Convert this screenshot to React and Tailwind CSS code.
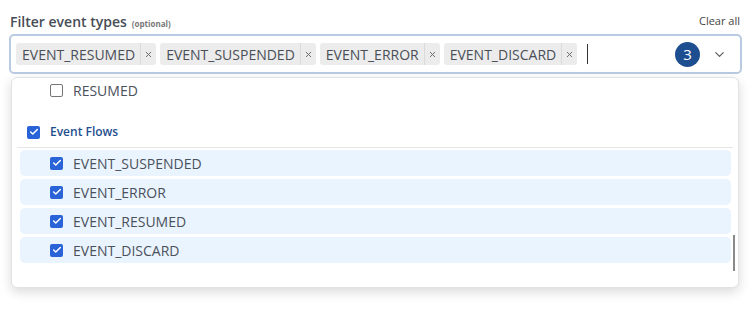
import { X, ChevronDown, Check } from 'lucide-react';

const SELECTED = ['EVENT_RESUMED', 'EVENT_SUSPENDED', 'EVENT_ERROR', 'EVENT_DISCARD'];
const FLOWS = ['EVENT_SUSPENDED', 'EVENT_ERROR', 'EVENT_RESUMED', 'EVENT_DISCARD'];

function Box({ checked }) {
  if (!checked) {
    return <span className="w-[13px] h-[13px] rounded-[2px] border border-[#767676] bg-white shrink-0" />;
  }
  return (
    <span className="w-[13px] h-[13px] rounded-[2px] bg-[#2a62d8] flex items-center justify-center shrink-0">
      <Check size={10} strokeWidth={3.5} className="text-white" />
    </span>
  );
}

function Chip({ label }) {
  return (
    <div className="h-[22px] flex items-center bg-[#ececec] rounded-[3px] text-[14px] text-[#4a4f57]">
      <span className="pl-[6px] pr-[5px]">{label}</span>
      <span className="h-full w-px bg-[#dadada]" />
      <span className="w-[15px] flex items-center justify-center text-[#666]">
        <X size={9} strokeWidth={2.5} />
      </span>
    </div>
  );
}

export default function App() {
  return (
    <div className="w-[751px] h-[309px] bg-white font-['Open_Sans',sans-serif] relative">
      {/* Label */}
      <div className="flex items-end justify-between pl-[10px] pr-[11px] pt-[8px] h-[30px]">
        <div className="flex items-baseline gap-[5px]">
          <span className="text-[14px] font-semibold text-[#474d56] leading-none">Filter event types</span>
          <span className="text-[8px] font-bold text-[#777]">(optional)</span>
        </div>
        <span className="text-[11px] text-[#444] leading-none mb-[4px]">Clear all</span>
      </div>

      {/* Input */}
      <div className="relative mx-[9px] mt-[4px]">
        <div className="h-[40px] border-2 border-[#b9cbe0] rounded-[5px] flex items-center pl-[5px] pr-[13px] gap-[4px]">
          {SELECTED.map((s) => (
            <Chip key={s} label={s} />
          ))}
          <span className="ml-[6px] w-px h-[20px] bg-[#333]" />
          <div className="flex-1" />
          <span className="w-[25px] h-[25px] rounded-full bg-[#1d4e8f] text-white text-[15px] flex items-center justify-center">3</span>
          <ChevronDown size={15} strokeWidth={1.75} className="text-[#555] ml-[8px]" />
        </div>

        {/* Dropdown */}
        <div className="absolute left-[2px] right-[3px] top-[43px] h-[211px] bg-white border border-[#e2e2e2] rounded-[6px] shadow-[0_4px_12px_rgba(0,0,0,0.15)] overflow-hidden">
          <div className="flex items-center gap-[10px] pl-[38px] h-[24px] text-[14px] text-[#4b515b]">
            <Box checked={false} />
            <span>RESUMED</span>
          </div>
          <div className="flex items-center gap-[10px] pl-[15px] h-[26px] mt-[17px] text-[12px] font-semibold text-[#1f4f8e]">
            <Box checked />
            <span>Event Flows</span>
          </div>
          <div className="mx-[5px] h-px bg-[#e6e6e6] mt-[2px]" />
          <div className="flex flex-col gap-[3px] mt-[2px] pl-[8px] pr-[7px]">
            {FLOWS.map((f) => (
              <div key={f} className="h-[26px] bg-[#eaf4fe] rounded-[5px] flex items-center gap-[10px] pl-[30px] text-[14px] text-[#4b515b]">
                <Box checked />
                <span>{f}</span>
              </div>
            ))}
          </div>
          <span className="absolute right-[3px] top-[157px] w-[2px] h-[36px] bg-[#8a8a8a]" />
        </div>
      </div>
    </div>
  );
}
